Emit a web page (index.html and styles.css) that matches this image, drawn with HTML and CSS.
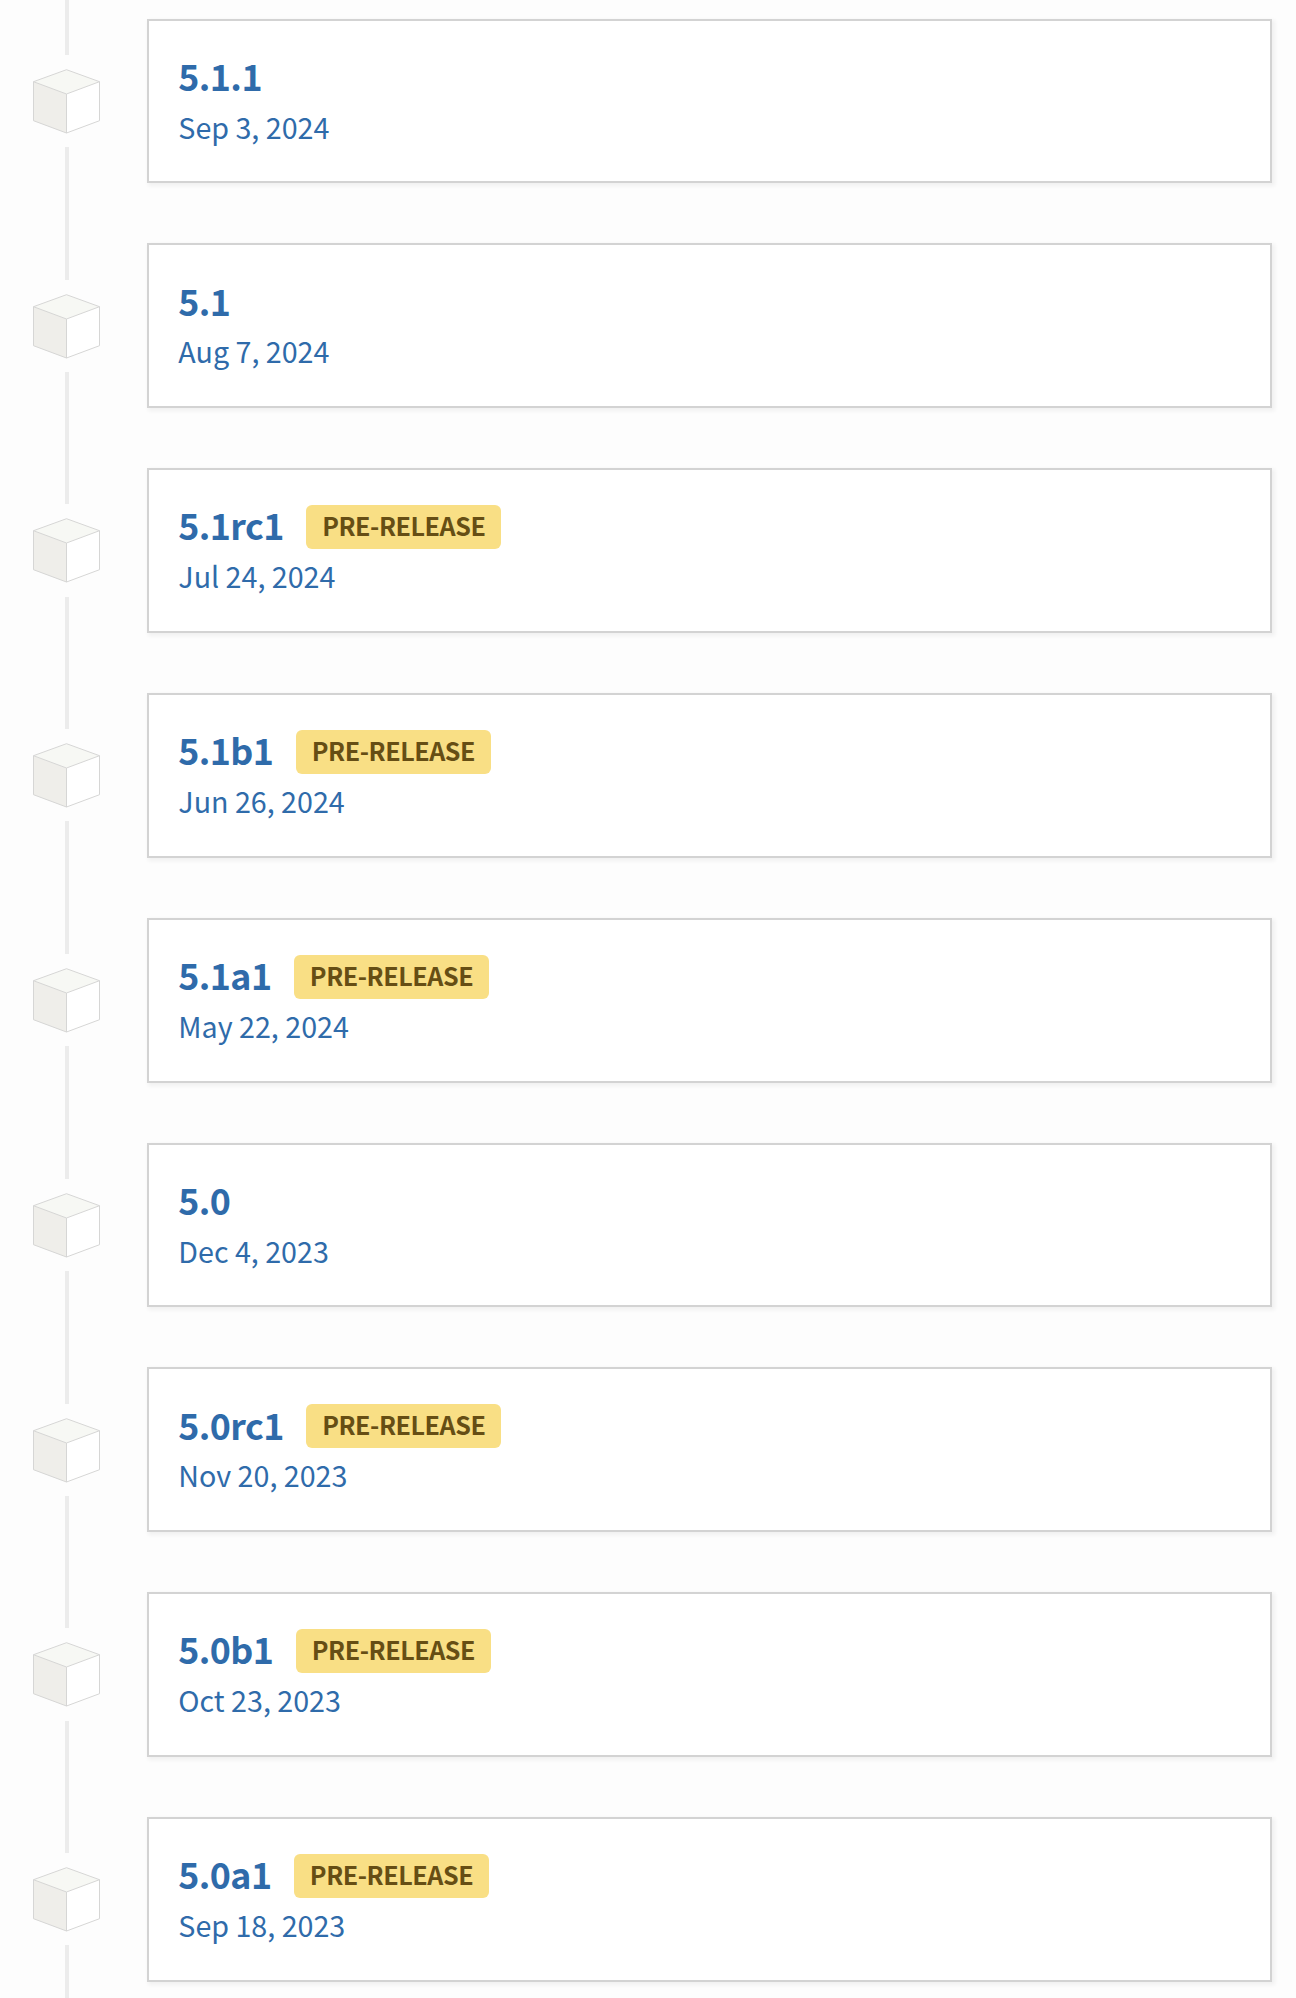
FILE: index.html
```
<!DOCTYPE html>
<html lang="en">
<head>
<meta charset="utf-8">
<title>Release history</title>
<link rel="stylesheet" href="styles.css">
</head>
<body>
<svg class="defs" aria-hidden="true">
  <symbol id="cube" viewBox="-0.5 0 68 65">
    <path d="M34 .7 67 12.7 34 25 1 12.7Z" fill="#f7f8f4"/>
    <path d="M1 12.7 34 25V64L1 51.7Z" fill="#efeeea"/>
    <path d="M67 12.7 34 25V64L67 51.7Z" fill="#fff"/>
    <path d="M34 .7 67 12.7V51.7L34 64 1 51.7V12.7ZM1 12.7 34 25 67 12.7M34 25V64" fill="none" stroke="#d6d6d5" stroke-width="1" stroke-linejoin="round"/>
  </symbol>
</svg>
<main class="timeline">
  <article class="release">
    <div class="node"><svg class="cube"><use href="#cube"/></svg></div>
    <a class="card"><p class="version"><span class="number">5.1.1</span></p><p class="date">Sep 3, 2024</p></a>
  </article>
  <article class="release">
    <div class="node"><svg class="cube"><use href="#cube"/></svg></div>
    <a class="card"><p class="version"><span class="number">5.1</span></p><p class="date">Aug 7, 2024</p></a>
  </article>
  <article class="release">
    <div class="node"><svg class="cube"><use href="#cube"/></svg></div>
    <a class="card"><p class="version"><span class="number">5.1rc1</span><span class="badge">PRE-RELEASE</span></p><p class="date">Jul 24, 2024</p></a>
  </article>
  <article class="release">
    <div class="node"><svg class="cube"><use href="#cube"/></svg></div>
    <a class="card"><p class="version"><span class="number">5.1b1</span><span class="badge">PRE-RELEASE</span></p><p class="date">Jun 26, 2024</p></a>
  </article>
  <article class="release">
    <div class="node"><svg class="cube"><use href="#cube"/></svg></div>
    <a class="card"><p class="version"><span class="number">5.1a1</span><span class="badge">PRE-RELEASE</span></p><p class="date">May 22, 2024</p></a>
  </article>
  <article class="release">
    <div class="node"><svg class="cube"><use href="#cube"/></svg></div>
    <a class="card"><p class="version"><span class="number">5.0</span></p><p class="date">Dec 4, 2023</p></a>
  </article>
  <article class="release">
    <div class="node"><svg class="cube"><use href="#cube"/></svg></div>
    <a class="card"><p class="version"><span class="number">5.0rc1</span><span class="badge">PRE-RELEASE</span></p><p class="date">Nov 20, 2023</p></a>
  </article>
  <article class="release">
    <div class="node"><svg class="cube"><use href="#cube"/></svg></div>
    <a class="card"><p class="version"><span class="number">5.0b1</span><span class="badge">PRE-RELEASE</span></p><p class="date">Oct 23, 2023</p></a>
  </article>
  <article class="release">
    <div class="node"><svg class="cube"><use href="#cube"/></svg></div>
    <a class="card"><p class="version"><span class="number">5.0a1</span><span class="badge">PRE-RELEASE</span></p><p class="date">Sep 18, 2023</p></a>
  </article>
</main>
</body>
</html>
```
FILE: styles.css
```
* {
  box-sizing: border-box;
}

body {
  margin: 0;
  background: #fdfdfd;
  color: #2f6baa;
  font-family: "Noto Sans CJK JP", "Open Sans", sans-serif;
}

.defs {
  display: none;
}

.timeline {
  height: 1998px;
  overflow: hidden;
}

.release {
  display: flex;
  height: 224.8px;
  padding-right: 24px;
}

.node {
  display: flex;
  flex-direction: column;
  align-items: center;
  width: 134px;
  margin-right: 13px;
}

.node::before,
.node::after {
  content: "";
  width: 4px;
  background: #ececec;
}

.node::before {
  height: 54.8px;
}

.node::after {
  flex: 1;
}

.cube {
  width: 68px;
  height: 65px;
  margin: 14px 2px 13.2px 0;
}

.card {
  flex: 1;
  height: 164.8px;
  margin-top: 18.65px;
  padding: 30.1px 30px 29px 29.3px;
  border: 2px solid #d3d3d3;
  background: #fff;
  box-shadow: 2px 2px 4px 1px rgba(0, 0, 0, 0.05);
}

.version,
.date {
  margin: 0;
}

.version {
  display: flex;
  align-items: flex-start;
  height: 48.8px;
  font-size: 35.8px;
  font-weight: 700;
  line-height: 48.8px;
}

.number {
  letter-spacing: -0.6px;
}

.badge {
  height: 44px;
  margin: 4.8px 0 0 22.4px;
  padding: 2px 16px 6px;
  border-radius: 6px;
  background: #f9df85;
  color: #664e14;
  font-size: 25.07px;
  letter-spacing: -0.43px;
  line-height: 36px;
}

.date {
  font-size: 28.66px;
  line-height: 53.6px;
}
```
